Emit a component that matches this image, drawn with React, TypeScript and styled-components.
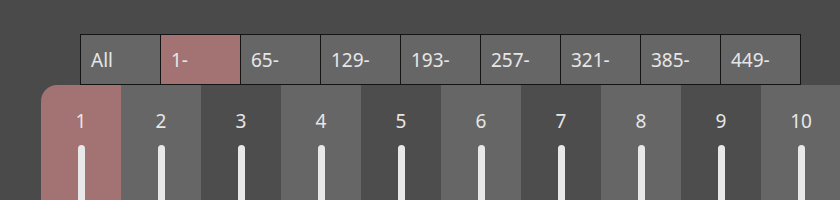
import * as React from "react";
import styled, { createGlobalStyle } from "styled-components";

const GlobalStyle = createGlobalStyle`
    html, body {
        margin: 0;
        padding: 0;
        background: #4a4a4a;
    }
    body {
        font-family: "Noto Sans", "DejaVu Sans", sans-serif;
        color: #e6e6e6;
    }
`;

// styles
const Page = styled.div`
    width: 840px;
    height: 200px;
    overflow: hidden;
    padding-top: 34px;
    box-sizing: border-box;
`;

const TabBar = styled.div`
    display: flex;
    margin-left: 80px;
    border-left: 1px solid #141414;
`;

const Tab = styled.div<{ $active?: boolean }>`
    width: 80px;
    height: 51px;
    box-sizing: border-box;
    display: flex;
    align-items: center;
    padding-left: 10px;
    border: 1px solid #141414;
    border-left: none;
    background: ${(p) => (p.$active ? "#a37272" : "#666666")};
    font-size: 19px;
    flex-shrink: 0;
`;

const Strip = styled.div`
    display: flex;
    margin-left: 41px;
    height: 115px;
    border-top-left-radius: 16px;
    overflow: hidden;
`;

const Channel = styled.div<{ $tone: "active" | "light" | "dark" }>`
    width: 80px;
    flex-shrink: 0;
    display: flex;
    flex-direction: column;
    align-items: center;
    padding-top: 24px;
    box-sizing: border-box;
    background: ${(p) =>
        p.$tone === "active" ? "#a37272" : p.$tone === "light" ? "#666666" : "#4d4d4d"};
`;

const Label = styled.div`
    font-size: 19px;
    line-height: 24px;
`;

const Fader = styled.div`
    margin-top: 12px;
    width: 7px;
    height: 80px;
    border-radius: 4px 4px 0 0;
    background: #e8e8e8;
`;

const tabs = ["All", "1-", "65-", "129-", "193-", "257-", "321-", "385-", "449-"];
const channels = Array.from({ length: 10 }, (_, i) => i + 1);

// markup
const App = () => {
    return (
        <>
            <GlobalStyle />
            <Page>
                <TabBar>
                    {tabs.map((t) => (
                        <Tab key={t} $active={t === "1-"}>
                            {t}
                        </Tab>
                    ))}
                </TabBar>
                <Strip>
                    {channels.map((n) => (
                        <Channel key={n} $tone={n === 1 ? "active" : n % 2 === 0 ? "light" : "dark"}>
                            <Label>{n}</Label>
                            <Fader />
                        </Channel>
                    ))}
                </Strip>
            </Page>
        </>
    );
};

export default App;
